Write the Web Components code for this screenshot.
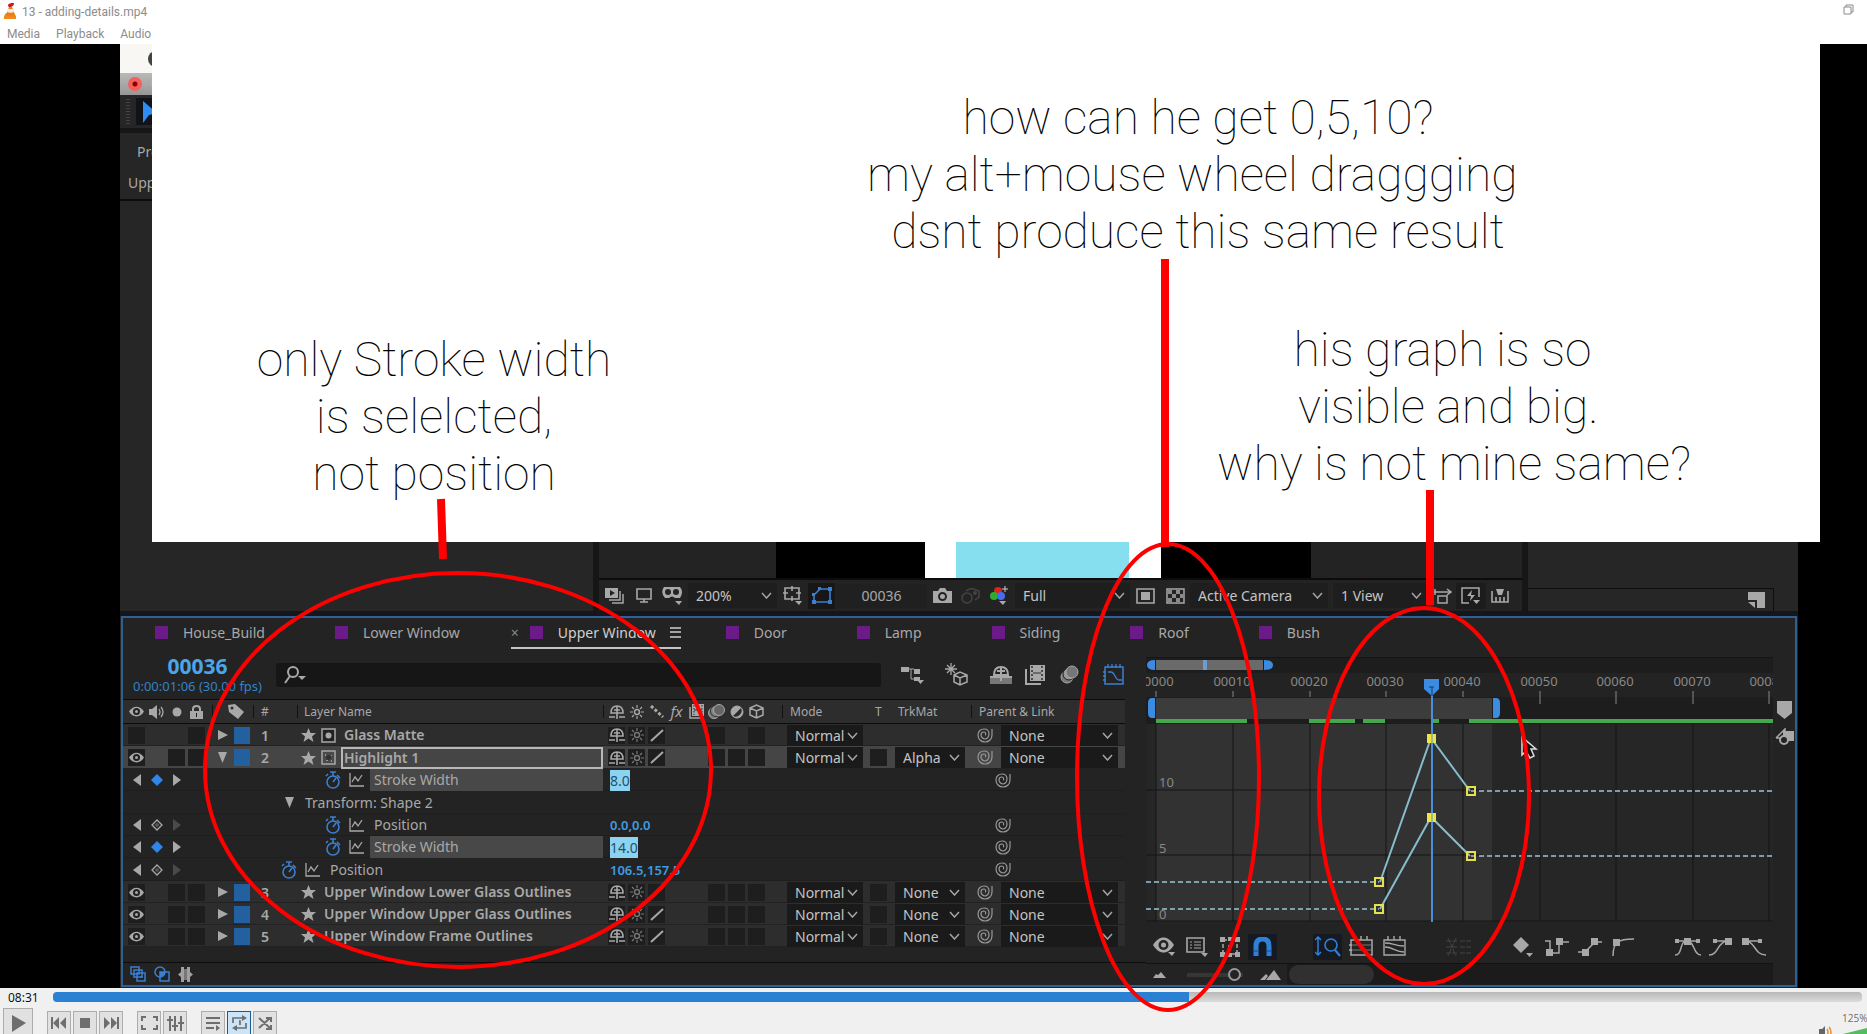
<!DOCTYPE html>
<html lang="en">
<head>
<meta charset="utf-8">
<title>13 - adding-details.mp4</title>
<style>
  body {
    margin: 0;
    background: #fff;
    font-family: "Noto Sans", "Open Sans", sans-serif;
    font-size: 14px;
  }
</style>
</head>
<body>
<video-player>
  <player-titlebar slot="title"></player-titlebar>
  <ae-window slot="video"></ae-window>
  <note-sheet slot="overlay"></note-sheet>
  <player-controls slot="controls"></player-controls>
</video-player>

<script>
// name: [width, height, svg content]
const ICONS = {
  cone: [14, 17, '<path d="M1 13l2-3h8l2 3v3H1z" fill="#f08a1c"/><path d="M3 12l3-8h3l3 8c-2 2-7 2-9 0z" fill="#ef7d12"/><path d="M4 9l1-3h5l1 3c-2 1-5 1-7 0z" fill="#eee"/><path d="M5 3c0-3 3-3 6-3 0 2-1 4-5 4z" fill="#d01818"/>'],
  restore: [11, 11, '<path d="M1 3h7v7H1zM3 3V1h7v7H8" fill="none" stroke="#8a8a8a"/>'],
  eye: [15, 11, '<path d="M0 5.5C4-1 11-1 15 5.5 11 12 4 12 0 5.5z" fill="currentColor"/><circle cx="7.500" cy="5.500" r="3.500" fill="#222"/><circle cx="7.500" cy="5.500" r="1.500" fill="currentColor"/>'],
  speaker: [15, 14, '<path d="M0 4h3l5-4v14L3 10H0z" fill="currentColor"/><path d="M10 4q2 3 0 6M12 2q4 5 0 10" fill="none" stroke="currentColor" stroke-width="1.300"/>'],
  dot: [10, 10, '<circle cx="5" cy="5" r="4.500" fill="currentColor"/>'],
  lock: [13, 14, '<path d="M0 6h13v8H0z" fill="currentColor"/><path d="M3 7V4q0-3 3.500-3T10 4v3" fill="none" stroke="currentColor" stroke-width="2"/><path d="M6 8h1v4H6z" fill="#222"/>'],
  tag: [16, 15, '<path d="M0 1l7-1 9 8-6 7L1 8z" fill="currentColor"/><circle cx="4" cy="4" r="1.500" fill="#2c2c2c"/>'],
  shy: [16, 14, '<path d="M2 8q0-7 6-7t6 7zM8 1v13M5 5h6M0 12h6M10 12h6" fill="none" stroke="currentColor" stroke-width="1.600"/>'],
  sun: [14, 14, '<circle cx="7" cy="7" r="2.500" fill="none" stroke="currentColor" stroke-width="1.400"/><path d="M7 0v3M7 11v3M0 7h3M11 7h3M2 2l2 2M10 10l2 2M12 2l-2 2M4 10l-2 2" stroke="currentColor" stroke-width="1.200"/>'],
  dashes: [14, 13, '<path d="M1 1l12 11" stroke="currentColor" stroke-width="3" stroke-dasharray="3 2"/>'],
  slash: [14, 13, '<path d="M1 12L13 1" stroke="currentColor" stroke-width="2"/>'],
  film: [15, 15, '<path d="M3 0h12v12H3z" fill="currentColor"/><path d="M1 3v11h11" fill="none" stroke="currentColor" stroke-width="1.500"/><path d="M5 1v10M13 1v10" stroke="#2c2c2c" stroke-dasharray="1.500"/><path d="M5 6h8" stroke="#2c2c2c"/>'],
  filmbig: [20, 20, '<path d="M5 0h15v16H5z" fill="currentColor"/><path d="M1 4v15h15" fill="none" stroke="currentColor" stroke-width="2"/><path d="M7 1v15M17 1v15" stroke="#2c2c2c" stroke-width="1.500" stroke-dasharray="2"/><path d="M8 8h8" stroke="#2c2c2c"/>'],
  blur: [17, 15, '<circle cx="6" cy="9" r="5.500" fill="#777" stroke="currentColor"/><circle cx="8" cy="7" r="5.500" fill="#888" stroke="#333"/><circle cx="11" cy="6" r="5.500" fill="#666" stroke="currentColor"/>'],
  blurbig: [19, 19, '<circle cx="7" cy="12" r="6" fill="#777" stroke="currentColor"/><circle cx="9" cy="9" r="6" fill="#999" stroke="#222"/><circle cx="12" cy="7" r="6" fill="#777" stroke="currentColor"/>'],
  half: [14, 14, '<circle cx="7" cy="7" r="6" fill="currentColor"/><path d="M11 3A6 6 0 0 1 3 11z" fill="#2c2c2c"/><circle cx="7" cy="7" r="6" fill="none" stroke="currentColor"/>'],
  cube: [15, 15, '<path d="M1 4l6.500-3L14 4v7l-6.500 3L1 11zM1 4l6.500 3L14 4M7.500 7v7" fill="none" stroke="currentColor" stroke-width="1.500"/>'],
  right: [10, 10, '<path d="M0 0l10 5-10 5z" fill="currentColor"/>'],
  down: [10, 11, '<path d="M0 0h9L4.500 11z" fill="currentColor"/>'],
  prev: [8, 12, '<path d="M8 0v12L0 6z" fill="currentColor"/>'],
  next: [8, 12, '<path d="M0 0v12l8-6z" fill="currentColor"/>'],
  key: [12, 12, '<path d="M6 1l5 5-5 5-5-5z" fill="none" stroke="currentColor" stroke-width="1.300"/><path d="M6 3.500L8.500 6 6 8.500 3.500 6z" fill="#555"/>'],
  keyon: [12, 12, '<path d="M6 0l6 6-6 6-6-6z" fill="currentColor"/>'],
  star: [15, 14, '<path d="M7.500 0l2 5H15l-4 3.500L12.500 14l-5-3.500-5 3.500L4 8.500 0 5h5.500z" fill="currentColor"/>'],
  matte: [15, 15, '<path d="M1 1h13v13H1z" fill="#222" stroke="currentColor" stroke-width="1.500"/><circle cx="7.500" cy="7.500" r="3" fill="currentColor"/>'],
  mattein: [15, 15, '<path d="M1 1h13v13H1z" fill="#4a4a4a" stroke="currentColor" stroke-width="1.500"/><path d="M4 4h1v2H4zM10 5h1v1h-1zM5 10h2v1H5zM10 10h1v2h-1z" fill="#999"/><circle cx="7.500" cy="7.500" r="2.500" fill="#333"/>'],
  watch: [16, 18, '<circle cx="8" cy="11" r="6" fill="none" stroke="currentColor" stroke-width="1.600"/><path d="M5 1h6M8 1v4M1 5l2-2M12 4l3 3M8 11l3-4" stroke="currentColor" stroke-width="1.600"/>'],
  curve: [15, 14, '<path d="M1 0v13h14M3 9l3-5 3 4 4-6" fill="none" stroke="currentColor" stroke-width="1.300"/>'],
  whip: [16, 15, '<path d="M15 1v6c0 4-3 7-7 7s-7-3-7-7 3-6 6-6 5 2 5 5-2 5-4 5-4-2-4-4 1-3 3-3 2 3 1 3" fill="none" stroke="currentColor" stroke-width="1.200"/>'],
  chevron: [11, 7, '<path d="M1 1l4.500 5L10 1" fill="none" stroke="currentColor" stroke-width="1.500"/>'],
  search: [22, 18, '<circle cx="9" cy="6" r="5" fill="none" stroke="currentColor" stroke-width="2"/><path d="M6 10l-5 7" stroke="currentColor" stroke-width="2"/><path d="M14 10h8l-4 4z" fill="currentColor"/>'],
  menu: [11, 11, '<path d="M0 1h11M0 5h11M0 10h11" stroke="currentColor" stroke-width="1.300"/>'],
  flow: [23, 18, '<path d="M0 1h8v5H0zM13 3h6v5h-6zM13 11h6v4h-6z" fill="currentColor"/><path d="M8 3h5M10 3v10h4" stroke="currentColor" fill="none"/><path d="M16 14h7l-3.500 4z" fill="currentColor"/>'],
  draft: [23, 23, '<path d="M6 0v12M0 6h12M2 2l8 8M10 2l-8 8" stroke="currentColor" stroke-width="1.300"/><path d="M9 12l6-3 7 3v7l-7 3-6-3zM9 12l6 3 7-3M15 15v7" fill="none" stroke="currentColor" stroke-width="1.500"/>'],
  shybig: [22, 18, '<path d="M0 11h22v7H0z" fill="#777"/><path d="M4 9q0-8 7-8t7 8zM11 1v14M7 5h8M0 11h22" fill="none" stroke="currentColor" stroke-width="2"/>'],
  grapheditor: [22, 22, '<path d="M2 3h18v17H2z" fill="none" stroke="currentColor" stroke-width="1.500"/><path d="M5 8h3c4 0 4 8 8 8h3M5 0v4M9 0v4M13 0v4M17 0v4M0 8h3M0 12h3M0 16h3" fill="none" stroke="currentColor" stroke-width="1.300"/>'],
  layersblue: [16, 16, '<path d="M1 1h8v7H1zM4 4h8v7H4zM7 7h8v8H7z" fill="#232323" stroke="currentColor" stroke-width="1.500"/><path d="M10 11h3" stroke="currentColor"/>'],
  modesblue: [16, 16, '<circle cx="6" cy="6" r="5" fill="none" stroke="currentColor" stroke-width="1.500"/><path d="M6 6h9v9H6z" fill="none" stroke="currentColor" stroke-width="1.500"/><path d="M6 6h5q0 4-5 5z" fill="currentColor"/>'],
  braces: [15, 15, '<path d="M3 0h3v15H3v-5L0 7.500 3 5zM12 0H9v15h3v-5l3-2.500L12 5z" fill="#a0a0a0"/><path d="M6 2h3v11H6z" fill="#777"/>'],
  preview: [19, 16, '<path d="M0 0h13v10H0z" fill="currentColor"/><path d="M5 2l5 3-5 3z" fill="#232323"/><path d="M4 12h11V3M7 15h11V6" fill="none" stroke="currentColor" stroke-width="1.500"/>'],
  monitor: [16, 15, '<path d="M1 1h14v10H1zM4 14h8M8 11v3" fill="none" stroke="currentColor" stroke-width="1.600"/>'],
  goggles: [22, 19, '<path d="M2 1h16q4 5 0 11h-5q-3-3-6 0H3Q-2 6 2 1z" fill="currentColor"/><circle cx="6" cy="6" r="3" fill="#232323"/><circle cx="14" cy="6" r="3" fill="#232323"/><path d="M13 15h7l-3 4z" fill="currentColor"/>'],
  gridbox: [19, 19, '<path d="M2 2h14v11H2zM9 0v5M9 10v5M0 7h5M13 7h5" fill="none" stroke="currentColor" stroke-width="1.600"/><path d="M12 15h7l-3 4z" fill="currentColor"/>'],
  mask: [20, 17, '<path d="M2 15V8l6-6h10v13z" fill="none" stroke="currentColor" stroke-width="1.600"/><path d="M0 13h4v4H0zM16 13h4v4h-4zM16 0h4v4h-4zM6 0h3v3H6zM0 6h3v3H0z" fill="currentColor"/>'],
  camera: [19, 15, '<path d="M0 3h5l2-3h5l2 3h5v12H0z" fill="currentColor"/><circle cx="9.500" cy="8.500" r="3.500" fill="none" stroke="#232323" stroke-width="2"/>'],
  snapshot: [19, 16, '<circle cx="6" cy="10" r="5" fill="none" stroke="currentColor" stroke-width="1.500"/><path d="M5 3q5-4 10-1l3 1v6l-4 3" fill="none" stroke="currentColor" stroke-width="1.500"/><circle cx="14" cy="5" r="2" fill="currentColor"/>'],
  rgb: [18, 19, '<circle cx="8" cy="5" r="4" fill="#d22"/><circle cx="4" cy="10" r="4" fill="#2cae2c"/><circle cx="11" cy="10" r="4" fill="#4a6af0"/><path d="M15 0v6M12 3h6" stroke="#ccc"/><path d="M9 15h7l-3 4z" fill="#aaa"/>'],
  region: [19, 16, '<path d="M1 1h17v14H1z" fill="none" stroke="currentColor" stroke-width="1.600"/><path d="M5 4h9v8H5z" fill="currentColor"/>'],
  checker: [19, 16, '<path d="M1 1h17v14H1z" fill="none" stroke="currentColor" stroke-width="1.500"/><path d="M2 2h4v4H2zM10 2h4v4h-4zM6 6h4v4H6zM14 6h4v4h-4zM2 10h4v4H2zM10 10h4v4h-4z" fill="#8a8a8a"/>'],
  aspect: [18, 16, '<path d="M0 4h17M13 1l4 3-4 3M4 8h9v7H4zM1 1v6" fill="none" stroke="currentColor" stroke-width="1.500"/>'],
  fast: [20, 17, '<path d="M8 16H1V1h17v9" fill="none" stroke="currentColor" stroke-width="1.500"/><path d="M11 3L6 9h4l-1 5 5-6h-4zM12 13h7l-3.500 4z" fill="currentColor"/>'],
  ruler: [18, 14, '<path d="M1 2v11h16V2M5 8v5M9 8v5M13 8v5" fill="none" stroke="currentColor" stroke-width="1.600"/><path d="M5 0h8l-2 6H7z" fill="currentColor"/>'],
  note: [17, 16, '<path d="M0 0h17v16H9V8H0z" fill="currentColor"/><path d="M0 10h7v6z" fill="currentColor"/>'],
  eyebig: [22, 19, '<path d="M0 8C6-2 15-2 21 8 15 18 6 18 0 8z" fill="currentColor"/><circle cx="10.500" cy="8" r="5" fill="#232323"/><circle cx="10.500" cy="8" r="2.500" fill="currentColor"/><path d="M15 15h7l-3 4z" fill="currentColor"/>'],
  list: [22, 20, '<path d="M1 1h17v14H1z" fill="none" stroke="currentColor" stroke-width="1.600"/><path d="M4 5h2M8 5h7M4 8h2M8 8h7M4 11h2M8 11h7" stroke="currentColor"/><path d="M15 16h7l-3 4z" fill="currentColor"/>'],
  transform: [20, 20, '<path d="M3 3h14v14H3z" fill="none" stroke="currentColor" stroke-width="1.500" stroke-dasharray="4 2"/><path d="M0 0h5v5H0zM8 0h4v4H8zM15 0h5v5h-5zM0 15h5v5H0zM15 15h5v5h-5zM8 16h4v4H8zM8 8h3v3H8z" fill="currentColor"/>'],
  magnet: [19, 19, '<path d="M3 19V9q0-7 6.500-7T16 9v10" fill="none" stroke="currentColor" stroke-width="5"/><path d="M0 14h6M13 14h6" stroke="#1b4a80"/>'],
  autozoom: [26, 21, '<path d="M3 1v18M0 4l3-3 3 3M0 16l3 3 3-3" fill="none" stroke="currentColor" stroke-width="1.500"/><circle cx="16" cy="9" r="6" fill="none" stroke="currentColor" stroke-width="1.600"/><path d="M20 14l5 6" stroke="currentColor" stroke-width="2"/>'],
  fitsel: [24, 21, '<path d="M2 4h21v15H2zM6 0v4M12 0v4M18 0v4M0 9h3M0 14h3" fill="none" stroke="currentColor" stroke-width="1.500"/><path d="M3 9h19M3 14h19" stroke="#777"/>'],
  fitall: [24, 21, '<path d="M2 4h21v15H2zM6 0v4M12 0v4M18 0v4M3 7c8 0 10 3 19 3M3 11c8 0 10 5 19 5" fill="none" stroke="currentColor" stroke-width="1.400"/>'],
  separate: [26, 18, '<path d="M0 3h12M0 9h12M0 15h12M14 3h12M14 9h12M14 15h12M2 0l8 18M10 0L2 18" stroke="#444" stroke-dasharray="5 1"/>'],
  keybig: [22, 20, '<path d="M8 0l8 8-8 8-8-8z" fill="currentColor"/><path d="M13 16h7l-3.500 4z" fill="currentColor"/>'],
  hold: [24, 18, '<path d="M0 3h5v12h9V4h10" fill="none" stroke="currentColor" stroke-width="1.500"/><path d="M11 0h7v7h-7zM1 11h7v7H1z" fill="currentColor"/>'],
  linear: [24, 18, '<path d="M0 14h7L17 4h7" fill="none" stroke="currentColor" stroke-width="1.500"/><path d="M13 0h7v7h-7zM4 11h7v7H4z" fill="currentColor"/>'],
  bezier: [22, 18, '<path d="M1 18C1 4 6 1 22 1" fill="none" stroke="currentColor" stroke-width="1.500"/><path d="M1 1h7v7H1z" fill="currentColor"/>'],
  ease: [26, 18, '<path d="M1 3h23M0 17c8 0 4-14 12-14s6 14 14 14" fill="none" stroke="currentColor" stroke-width="1.500"/><path d="M9 0h7v7H9zM0 1h4v4H0zM21 1h4v4h-4z" fill="currentColor"/>'],
  easein: [24, 18, '<path d="M4 3h17M0 17c10 0 8-13 18-14" fill="none" stroke="currentColor" stroke-width="1.500"/><path d="M16 0h7v7h-7zM4 1h4v4H4z" fill="currentColor"/>'],
  easeout: [24, 18, '<path d="M3 3h17M4 3c10 1 8 14 20 14" fill="none" stroke="currentColor" stroke-width="1.500"/><path d="M0 0h7v7H0zM16 1h4v4h-4z" fill="currentColor"/>'],
  hillsmall: [13, 6, '<path d="M0 6l3-4 2 1 3-3 5 6z" fill="currentColor"/>'],
  hillbig: [21, 10, '<path d="M0 10l6-6 2 2-3 4zM6 10l8-10 7 10z" fill="currentColor"/>'],
  marker: [15, 18, '<path d="M0 0h15v12l-7.500 6L0 12z" fill="currentColor"/>'],
  button: [19, 17, '<path d="M8 3h11v10H8z" fill="currentColor"/><path d="M1 10l9-9v8M1 10h6" fill="none" stroke="currentColor" stroke-width="1.500"/><circle cx="9" cy="12" r="4" fill="#232323" stroke="currentColor" stroke-width="2"/>'],
  play: [15, 17, '<path d="M1 0l14 8L1 17z" fill="currentColor"/>'],
  skipback: [16, 12, '<path d="M0 0h2v12H0zM8 0v12L2 6zM15 0v12L9 6z" fill="currentColor"/>'],
  stop: [10, 10, '<path d="M0 0h10v10H0z" fill="currentColor"/>'],
  skipfwd: [16, 12, '<path d="M14 0h2v12h-2zM1 0v12l6-6zM8 0v12l6-6z" fill="currentColor"/>'],
  full: [17, 14, '<path d="M1 5V1h4M12 1h4v4M16 9v4h-4M5 13H1V9" fill="none" stroke="currentColor" stroke-width="2"/>'],
  sliders: [17, 15, '<path d="M3 0v15M8 0v15M14 0v15M0 4h6M5 10h6M11 7h6" stroke="currentColor" stroke-width="2"/>'],
  playlist: [15, 15, '<path d="M0 2h14M0 7h14M0 12h8" stroke="currentColor" stroke-width="2"/><path d="M10 9l4 3-4 3z" fill="currentColor"/>'],
  loop: [15, 16, '<path d="M1 8V3h11M14 8v5H3M7 6h1v4" fill="none" stroke="currentColor" stroke-width="1.700"/><path d="M10 0l5 3-5 3zM5 10l-5 3 5 3z" fill="currentColor"/>'],
  shuffle: [14, 14, '<path d="M1 2l11 10M1 12L12 2M8 2h5v4M13 9v4H8" fill="none" stroke="currentColor" stroke-width="2"/>'],
  sound: [14, 14, '<path d="M0 4h3l3-3v13l-3-3H0z" fill="#666"/><path d="M8 4q2 3 0 7M10 2q4 5 0 11" fill="none" stroke="#e8902a" stroke-width="1.500"/>']
};

class UiIcon extends HTMLElement {
  connectedCallback() {
    const [w, h, shape] = ICONS[this.getAttribute('name')];
    this.attachShadow({ mode: 'open' }).innerHTML = `
      <style>
        :host { display: inline-flex; flex: none; align-items: center; justify-content: center; }
        svg { display: block; flex: none; }
      </style>
      <svg width="${w}" height="${h}" viewBox="0 0 ${w} ${h}" aria-hidden="true">${shape}</svg>
    `;
  }
}
customElements.define('ui-icon', UiIcon);

class AeSelect extends HTMLElement {
  connectedCallback() {
    const value = this.getAttribute('value');
    this.attachShadow({ mode: 'open' }).innerHTML = `
      <style>
        :host { display: grid; align-items: stretch; background: #1a1a1a; color: #c4c4c4; }
        select, ui-icon { grid-area: 1 / 1; }
        select {
          appearance: none; width: 100%; min-width: 0; border: 0; border-radius: 0; margin: 0;
          padding: 0 0 0 8px; background: transparent; color: inherit;
          font: inherit;
        }
        ui-icon { justify-self: end; margin-right: 5px; pointer-events: none; color: #a5a5a5; }
      </style>
      <select aria-label="${this.getAttribute('label')}"><option>${value}</option></select>
      <ui-icon name="chevron"></ui-icon>
    `;
  }
}
customElements.define('ae-select', AeSelect);

class VideoPlayer extends HTMLElement {
  connectedCallback() {
    this.attachShadow({ mode: 'open' }).innerHTML = `
      <style>
        :host { display: flex; flex-direction: column; position: relative; height: 100vh; overflow: hidden; }
        .stage { flex: 1; min-height: 0; display: flex; background: #000; padding: 0 69px 0 120px; }
        ::slotted([slot="video"]) { flex: 1; min-width: 0; }
      </style>
      <slot name="title"></slot>
      <div class="stage"><slot name="video"></slot></div>
      <slot name="controls"></slot>
      <slot name="overlay"></slot>
    `;
  }
}
customElements.define('video-player', VideoPlayer);

class PlayerTitlebar extends HTMLElement {
  connectedCallback() {
    this.attachShadow({ mode: 'open' }).innerHTML = `
      <style>
        :host { display: block; height: 44px; background: #fff; color: #8c8c8c; font: 12px/22px Roboto, sans-serif; }
        .title { display: flex; align-items: center; gap: 5px; height: 23px; padding: 0 0 0 3px; white-space: nowrap; }
        nav { display: flex; gap: 16px; height: 21px; padding-left: 7px; }
        a { color: inherit; text-decoration: none; }
      </style>
      <div class="title"><ui-icon name="cone"></ui-icon><span>13 - adding-details.mp4</span></div>
      <nav><a href="#">Media</a><a href="#">Playback</a><a href="#">Audio</a></nav>
    `;
  }
}
customElements.define('player-titlebar', PlayerTitlebar);

class AeWindow extends HTMLElement {
  connectedCallback() {
    this.attachShadow({ mode: 'open' }).innerHTML = `
      <style>
        :host { display: flex; flex-direction: column; background: #232323; color: #a8a8a8; overflow: hidden; }
        .mac { height: 29px; background: #f8f7f3; display: flex; padding-left: 28px; align-items: center; }
        .mac i { width: 16px; height: 16px; border-radius: 8px; background: #444; }
        .bar { height: 22px; background: linear-gradient(#b9b9b9, #979797); display: flex; align-items: center; gap: 9px; padding-left: 8px; }
        .bar i { width: 14px; height: 14px; border-radius: 7px; background: radial-gradient(circle, #800 0 2px, #f4605c 3px); }
        .bar i + i { background: #f0a840; }
        .tools { height: 33px; border-bottom: 5px solid #161616; display: flex; align-items: center; gap: 6px; padding-left: 6px; background: #262626; color: #2f8cf0; }
        .grip { width: 4px; height: 25px; background: repeating-linear-gradient(#444 0 1px, #262626 1px 3px); }
        .tool { background: #101418; width: 28px; height: 27px; display: flex; align-items: center; padding-left: 7px; }
        .tool svg { display: block; }
        .top { flex: 1; min-height: 0; display: flex; background: #161616; gap: 6px; border-bottom: 5px solid #15161c; }
        .project { width: 473px; background: #262626; }
        .project p { margin: 0; height: 32px; line-height: 32px; padding-left: 8px; }
        .project p:first-child { padding: 3px 0 0 17px; height: 31px; }
        .project p + p { border-bottom: 2px solid #0c0c0c; }
        ae-viewer { flex: 1; min-width: 0; }
        .side { width: 270px; background: #262626; display: flex; align-items: flex-end; }
        .side div { flex: 1; height: 22px; margin-right: 24px; border: 1px solid #0e0e0e; border-width: 1px 1px 0 0; display: flex; justify-content: flex-end; align-items: center; padding-right: 8px; }
      </style>
      <div class="mac"><i></i></div>
      <div class="bar"><i></i><i></i></div>
      <div class="tools"><span class="grip"></span><span class="tool"><svg width="14" height="22" viewBox="0 0 14 22"><path d="M0 0l14 12-8 2-6 8z" fill="currentColor"/></svg></span></div>
      <div class="top">
        <section class="project"><p>Project</p><p>Upper Window</p></section>
        <ae-viewer></ae-viewer>
        <section class="side"><div><ui-icon name="note"></ui-icon></div></section>
      </div>
      <ae-timeline></ae-timeline>
    `;
  }
}

class AeViewer extends HTMLElement {
  connectedCallback() {
    this.attachShadow({ mode: 'open' }).innerHTML = `
      <style>
        :host { display: flex; flex-direction: column; background: #232323; overflow: hidden; }
        .canvas { flex: 1; min-height: 0; display: flex; justify-content: center; padding-right: 35px; border-bottom: 2px solid #0c0c0c; }
        .comp { width: 535px; background: #000; display: flex; justify-content: center; }
        .house { width: 236px; padding: 0 32px 0 31px; box-sizing: border-box; background: #fff; display: flex; }
        .pane { flex: 1; background: #85dfee; }
        .tools {
          display: grid; align-items: center; justify-items: center; height: 31px; white-space: nowrap;
          grid-template-columns: 31px 28px 30px 89px 30px 29px 91px 31px 25px 32px 115px 30px 30px 138px 5px 94px 31px 26px 32px 8px;
        }
        ae-select { width: 100%; height: 25px; background: #1e1e1e; }
        .on { background: #171717; width: 27px; height: 26px; color: #3c7fd0; }
        .dark { background: #1c1c1c; width: 30px; height: 26px; }
        .dim { color: #444; }
        button { font: inherit; color: inherit; border: 0; background: #202020; padding: 0; width: 100%; height: 24px; }
      </style>
      <div class="canvas"><div class="comp"><div class="house"><div class="pane"></div></div></div></div>
      <div class="tools">
        <ui-icon name="preview"></ui-icon><ui-icon name="monitor"></ui-icon><ui-icon name="goggles"></ui-icon>
        <ae-select label="Magnification" value="200%"></ae-select>
        <ui-icon name="gridbox"></ui-icon><ui-icon class="on" name="mask"></ui-icon>
        <button>00036</button>
        <ui-icon name="camera"></ui-icon><ui-icon class="dim" name="snapshot"></ui-icon><ui-icon name="rgb"></ui-icon>
        <ae-select label="Resolution" value="Full"></ae-select>
        <ui-icon name="region"></ui-icon><ui-icon name="checker"></ui-icon>
        <ae-select label="3D view" value="Active Camera"></ae-select><span></span>
        <ae-select label="View layout" value="1 View"></ae-select>
        <ui-icon name="aspect"></ui-icon><ui-icon class="dark" name="fast"></ui-icon><ui-icon name="ruler"></ui-icon>
      </div>
    `;
  }
}

const TABS = ['House_Build', 'Lower Window', 'Upper Window', 'Door', 'Lamp', 'Siding', 'Roof', 'Bush'];

class AeTimeline extends HTMLElement {
  connectedCallback() {
    this.attachShadow({ mode: 'open' }).innerHTML = `
      <style>
        :host { display: block; border: 2px solid #2f6095; margin: 0 1px 1px; background: #232323; }
        .tabs { display: flex; gap: 26px; height: 32px; padding-left: 13px; }
        .tab { display: flex; align-items: center; height: 31px; box-sizing: border-box; border: 0; border-bottom: 2px solid transparent; padding: 0; background: none; font: inherit; color: inherit; white-space: nowrap; }
        .tab.active { color: #d0d0d0; border-color: #c4c4c4; }
        .tab span { width: 19px; text-align: left; font-size: 14px; color: #888; }
        .tab i { width: 13px; height: 13px; background: #6a1b87; margin-right: 15px; }
        .tab ui-icon { width: 25px; justify-content: flex-end; }
        .tab:not(.active) span, .tab:not(.active) ui-icon { visibility: hidden; }
        .body { display: flex; }
        .left { width: 1023px; flex: none; display: flex; flex-direction: column; }
        .head { display: flex; align-items: center; height: 49px; }
        .time { width: 153px; box-sizing: border-box; padding-right: 4px; display: flex; flex-direction: column; align-items: center; color: #3682c4; line-height: 18px; white-space: nowrap; font-size: 13px; }
        .time button { border: 0; padding: 0; background: none; font: bold 21px/22px "Open Sans", sans-serif; color: #4ba5e8; }
        .search { width: 605px; box-sizing: border-box; height: 24px; background: #161616; border-radius: 3px; display: flex; align-items: center; padding-left: 8px; gap: 6px; }
        .search input { flex: 1; border: 0; background: none; color: inherit; font: inherit; outline: 0; }
        .head > ui-icon { width: 34px; }
        .head .flow { width: 62px; }
        .head .draft { width: 26px; margin-right: 15px; }
        .head .ge { color: #3c7fd0; width: 22px; margin-left: 17px; }
        footer { margin-top: auto; height: 22px; border-top: 1px solid #0c0c0c; display: flex; align-items: center; gap: 8px; padding-left: 7px; color: #3c7fd0; }
      </style>
      <div class="tabs">${TABS.map(name => `
        <button class="tab ${name === 'Upper Window' ? 'active' : ''}"><span aria-hidden="true">×</span><i></i>${name}<ui-icon name="menu"></ui-icon></button>`).join('')}
      </div>
      <div class="body">
        <div class="left">
          <div class="head">
            <div class="time"><button>00036</button>0:00:01:06 (30.00 fps)</div>
            <label class="search"><ui-icon name="search"></ui-icon><input type="text" aria-label="Search layers"></label>
            <ui-icon class="flow" name="flow"></ui-icon><ui-icon class="draft" name="draft"></ui-icon>
            <ui-icon name="shybig"></ui-icon><ui-icon name="filmbig"></ui-icon>
            <ui-icon name="blurbig"></ui-icon><ui-icon class="ge" name="grapheditor"></ui-icon>
          </div>
          <layer-table></layer-table>
          <footer><ui-icon name="layersblue"></ui-icon><ui-icon name="modesblue"></ui-icon><ui-icon name="braces"></ui-icon></footer>
        </div>
        <graph-editor></graph-editor>
      </div>
    `;
  }
}

const ROWS = [
  { num: 1, name: 'Glass Matte', icon: 'matte', boxes: [0, 2], cells: [0, 3] },
  { num: 2, name: 'Highlight 1', icon: 'mattein', open: true, eye: true, track: 'Alpha', boxes: [0, 1, 2], cells: [0, 2, 3] },
  { prop: 'Stroke Width', value: '8.0', key: true, selected: true },
  { group: 'Transform: Shape 2' },
  { prop: 'Position', value: '0.0,0.0' },
  { prop: 'Stroke Width', value: '14.0', key: true, selected: true },
  { prop: 'Position', value: '106.5,157.5', outer: true },
  { num: 3, name: 'Upper Window Lower Glass Outlines', eye: true, track: 'None', boxes: [0, 1, 2], cells: [0, 2, 3] },
  { num: 4, name: 'Upper Window Upper Glass Outlines', eye: true, track: 'None', boxes: [0, 1, 2], cells: [0, 2, 3] },
  { num: 5, name: 'Upper Window Frame Outlines', eye: true, track: 'None', boxes: [0, 1, 2], cells: [0, 2, 3] }
];

class LayerTable extends HTMLElement {
  connectedCallback() {
    this.attachShadow({ mode: 'open' }).innerHTML = `
      <style>
        :host { display: block; }
        table { width: 1023px; table-layout: fixed; border-collapse: collapse; }
        th, td { padding: 0; text-align: left; height: 22px; white-space: nowrap; overflow: hidden; }
        th { height: 25px; font-weight: normal; font-size: 12px; background: #2d2d2d; box-shadow: inset 0 1px #0c0c0c, inset 0 -1px #0c0c0c; }
        th + th:not(.plain) { background: linear-gradient(#111, #111) 0 6px / 1px 13px no-repeat #2d2d2d; }
        div { display: flex; align-items: center; height: 22px; box-sizing: border-box; }
        .av, .sw { gap: 3px; padding-left: 5px; }
        .av > *, .sw > * { width: 17px; height: 17px; flex: none; }
        .box { background: #1e1e1e; }
        .lab { gap: 6px; padding-left: 5px; }
        .lab ui-icon { width: 11px; }
        .lab i { width: 16px; height: 17px; background: #2360a0; }
        .num { padding-left: 8px; font-weight: 600; }
        .name { gap: 5px; padding-left: 4px; font-weight: 600; font-size: 14px; }
        .label { flex: 1; padding-left: 3px; line-height: 22px; }
        tr.layer td { background: #2d2d2d; box-shadow: inset 0 -1px #222; }
        tr.open td { background: #454545; }
        tr.open td, tr.outer td, tr.group td { height: 23px; }
        tr.open .label { border: 2px solid #b8b8b8; padding-left: 1px; line-height: 18px; }
        tr td.rest, th.rest { background: #232323 !important; box-shadow: none !important; }
        tr.prop td { box-shadow: inset 0 -1px #1e1e1e; }
        .pname { padding-left: 113px; }
        .pname .label { padding-left: 4px; }
        .outer .pname { padding-left: 69px; }
        .group .pname { padding-left: 73px; gap: 6px; }
        .pname .watch { color: #3c7fd0; margin-right: 8px; }
        .pname .curve { margin-right: 6px; }
        .picked .label { background: #484848; }
        .value { padding-left: 7px; color: #3f9be0; font-weight: 600; font-size: 13px; }
        .picked .value { font-weight: 400; font-size: 14px; }
        .picked .value span { background: #8bd3f0; color: #24506c; line-height: 21px; }
        .key { color: #2f86e8; } .off { color: #4a4a4a; }
        .mode { padding-left: 5px; } .mode ae-select { width: 76px; }
        .track { padding-left: 2px; } .track ae-select { width: 70px; }
        ae-select { height: 21px; }
        .parent { padding-left: 6px; gap: 8px; } .parent ae-select { width: 117px; }
        .whip { padding-left: 24px; }
        .parent ui-icon, .whip ui-icon { color: #999; }
        .t span { width: 17px; height: 17px; }
        .tpad { padding-left: 5px; }
      </style>
      <table>
        <colgroup>${[89, 41, 44, 306, 179, 88, 23, 78, 154, 21].map(w => `<col style="width:${w}px">`).join('')}</colgroup>
        <thead><tr>
          <th><div class="av"><ui-icon name="eye"></ui-icon><ui-icon name="speaker"></ui-icon><ui-icon name="dot"></ui-icon><ui-icon name="lock"></ui-icon></div></th>
          <th><div style="padding-left:16px"><ui-icon name="tag"></ui-icon></div></th>
          <th><div style="padding-left:8px">#</div></th>
          <th><div style="padding-left:7px">Layer Name</div></th>
          <th><div class="sw">${['shy', 'sun', 'dashes'].map(n => `<ui-icon name="${n}"></ui-icon>`).join('')}<i style="text-align:center;font-size:15px;line-height:17px">fx</i>${['film', 'blur', 'half', 'cube'].map(n => `<ui-icon name="${n}"></ui-icon>`).join('')}</div></th>
          <th><div style="padding-left:8px">Mode</div></th>
          <th class="plain"><div class="tpad">T</div></th>
          <th class="plain"><div class="tpad">TrkMat</div></th>
          <th><div style="padding-left:8px">Parent &amp; Link</div></th>
          <th class="rest"></th>
        </tr></thead>
        <tbody>${ROWS.map(row => row.num ? this.layerRow(row) : this.propRow(row)).join('')}</tbody>
      </table>
    `;
  }

  layerRow(row) {
    const av = [0, 1, 2, 3].map(i => i === 0 && row.eye
      ? '<ui-icon class="box" name="eye"></ui-icon>'
      : `<span class="${row.cells.includes(i) ? 'box' : ''}"></span>`).join('');
    const boxes = [0, 1, 2].map(i => `<span class="${row.boxes.includes(i) ? 'box' : ''}"></span>`).join('');
    return `
      <tr class="layer ${row.open ? 'open' : ''}">
        <td><div class="av">${av}</div></td>
        <td><div class="lab"><ui-icon name="${row.open ? 'down' : 'right'}"></ui-icon><i></i></div></td>
        <td><div class="num">${row.num}</div></td>
        <td><div class="name"><ui-icon name="star"></ui-icon>${row.icon ? `<ui-icon name="${row.icon}"></ui-icon>` : ''}<span class="label">${row.name}</span></div></td>
        <td><div class="sw"><ui-icon class="box" name="shy"></ui-icon><ui-icon class="box" style="color:#777" name="sun"></ui-icon><ui-icon class="box" name="slash"></ui-icon><span></span><span></span>${boxes}</div></td>
        <td><div class="mode"><ae-select label="Mode ${row.num}" value="Normal"></ae-select></div></td>
        <td><div class="t">${row.track ? '<span class="box"></span>' : ''}</div></td>
        <td><div class="track">${row.track ? `<ae-select label="Track matte ${row.num}" value="${row.track}"></ae-select>` : ''}</div></td>
        <td><div class="parent"><ui-icon name="whip"></ui-icon><ae-select label="Parent ${row.num}" value="None"></ae-select></div></td>
        <td class="rest"></td>
      </tr>`;
  }

  propRow(row) {
    if (row.group) {
      return `<tr class="prop group"><td></td><td colspan="3"><div class="pname"><ui-icon name="down"></ui-icon><span class="label">${row.group}</span></div></td><td colspan="5"></td><td class="rest"></td></tr>`;
    }
    return `
      <tr class="prop ${row.outer ? 'outer' : ''} ${row.selected ? 'picked' : ''}">
        <td><div class="av"><ui-icon name="prev"></ui-icon><ui-icon class="${row.key ? 'key' : ''}" name="${row.key ? 'keyon' : 'key'}"></ui-icon><ui-icon class="${row.key ? '' : 'off'}" name="next"></ui-icon></div></td>
        <td colspan="3"><div class="pname"><ui-icon class="watch" name="watch"></ui-icon><ui-icon class="curve" name="curve"></ui-icon><span class="label">${row.prop}</span></div></td>
        <td><div class="value"><span>${row.value}</span></div></td>
        <td colspan="3"></td>
        <td><div class="whip"><ui-icon name="whip"></ui-icon></div></td>
        <td class="rest"></td>
      </tr>`;
  }
}

class GraphEditor extends HTMLElement {
  connectedCallback() {
    // one label every ten frames
    const ticks = [9, 86, 163, 239, 316, 393, 469, 546, 622];
    const rulerTicks = ticks.map((x, i) => `
      <path d="M${x + 1} 34v${i > 4 ? 13 : 6}" stroke="#888"/>
      <text x="${x}" y="29" text-anchor="middle">000${i ? i + '0' : '00'}</text>`).join('');
    const cols = ticks.map(x => `<path d="M${x + 1} 67v197" stroke="#151515"/>`).join('');
    const levels = [133, 198, 264].map(y => `<path d="M0 ${y}h337" stroke="#151515"/>`).join('');
    this.attachShadow({ mode: 'open' }).innerHTML = `
      <style>
        :host { display: flex; flex: 1; min-width: 0; padding-top: 7px; }
        .main { flex: 1; min-width: 0; overflow: hidden; background: #232323; }
        .plot { display: block; width: 100%; height: 265px; background: #1d1d1d; overflow: hidden; }
        text { font: 13px "Noto Sans", sans-serif; fill: #888; }
        .tools { display: flex; gap: 32px; height: 41px; align-items: center; padding: 8px 0 0 1px; box-sizing: border-box; }
        .tools div { display: flex; }
        .tools ui-icon { width: 33px; height: 26px; }
        .on { color: #2f80d8; background: linear-gradient(#151a22, #151a22) center / 29px 100% no-repeat; }
        .zoom { display: flex; align-items: center; height: 22px; border-top: 1px solid #111; box-sizing: border-box; background: #1b1b1b; }
        .zoom label { display: flex; align-items: center; height: 21px; width: 141px; box-sizing: border-box; padding-left: 7px; background: #232323; }
        input { appearance: none; width: 56px; height: 4px; margin: 0 17px 0 21px; background: #363636; }
        input::-webkit-slider-thumb { appearance: none; width: 13px; height: 13px; box-sizing: border-box; border: 2px solid #999; border-radius: 7px; background: #232323; }
        .thumb { width: 85px; height: 19px; margin-left: 2px; border-radius: 10px; background: #303030; }
        .gutter { width: 22px; display: flex; flex-direction: column; align-items: center; gap: 9px; padding-top: 44px; box-sizing: border-box; }
      </style>
      <div class="main">
        <svg class="plot">
          <path d="M0 0h700v1H0z" fill="#151515"/>
          <path d="M10 3h107v10H10z" fill="#6a6a6a"/><path d="M57 3h4v10h-4z" fill="#6f9ccf"/>
          <path d="M9 3v10Q1 13 1 8t8-5zM118 3v10q9 0 9-5t-9-5z" fill="#3b8be0"/>
          <path d="M0 16h700v24H0z" fill="#232323"/>
          ${rulerTicks}
          <path d="M10 41h336v21H10z" fill="#3c3c3c"/>
          <path d="M9 41v20H6q-4 0-4-5V46q0-5 4-5zM347 41v20h3q4 0 4-5V46q0-5-4-5z" fill="#3b8be0"/>
          <path d="M10 62h91v4H10zM163 62h46v4h-46zM217 62h22v4h-22zM286 62h7v4h-7zM323 62h400v4H323z" fill="#45a84c"/>
          <path d="M0 67h700v198H0z" fill="#262626"/><path d="M10 67h336v197H10z" fill="#323232"/>
          ${cols}${levels}<path d="M337 264h400" stroke="#151515"/>
          <text x="13" y="130">10</text><text x="13" y="196">5</text><text x="13" y="262">0</text>
          <path d="M0 225h233M0 252h233M325 134h302M325 199h302" stroke="#93c9d4" stroke-width="1.500" stroke-dasharray="5 3"/>
          <path d="M234 225L285 81l39 53M234 252l51-92 39 39" fill="none" stroke="#86bccb" stroke-width="2"/>
          <path d="M286 22v243" stroke="#4a8fdc" stroke-width="2"/>
          <path d="M229 221h8v8h-8zM229 248h8v8h-8zM321 130h8v8h-8zM321 195h8v8h-8z" fill="none" stroke="#e8e04a" stroke-width="2"/>
          <path d="M281 77h9v9h-9zM281 156h9v9h-9z" fill="#f0e440"/><path d="M286 76v90" stroke="#4a8fdc" stroke-width="1"/>
          <path d="M278 22h15v10l-7 7-8-7z" fill="#3b8be0"/><path d="M283 30h5M286 30v9" stroke="#123a66"/>
          <path d="M376 80v18l4-4 4 7 4-2-3-7h5z" fill="#111" stroke="#ddd" stroke-width="1.500"/>
        </svg>
        <div class="tools">
          <div><ui-icon name="eyebig"></ui-icon><ui-icon name="list"></ui-icon><ui-icon name="transform"></ui-icon><ui-icon class="on" name="magnet"></ui-icon></div>
          <div><ui-icon class="on" name="autozoom"></ui-icon><ui-icon name="fitsel"></ui-icon><ui-icon name="fitall"></ui-icon></div>
          <div><ui-icon name="separate"></ui-icon></div>
          <div><ui-icon name="keybig"></ui-icon><ui-icon name="hold"></ui-icon><ui-icon name="linear"></ui-icon><ui-icon name="bezier"></ui-icon></div>
          <div><ui-icon name="ease"></ui-icon><ui-icon name="easein"></ui-icon><ui-icon name="easeout"></ui-icon></div>
        </div>
        <div class="zoom"><label><ui-icon name="hillsmall"></ui-icon><input type="range" aria-label="Time zoom" value="96"><ui-icon name="hillbig"></ui-icon></label><span class="thumb"></span></div>
      </div>
      <div class="gutter"><ui-icon name="marker"></ui-icon><ui-icon name="button"></ui-icon></div>
    `;
  }
}

class PlayerControls extends HTMLElement {
  connectedCallback() {
    this.attachShadow({ mode: 'open' }).innerHTML = `
      <style>
        :host { display: block; height: 46px; overflow: hidden; background: #f0f0f0; color: #6e6e6e; }
        .seek { display: flex; align-items: center; gap: 17px; height: 20px; padding: 0 5px 0 8px; color: #111; }
        .seek span { width: 28px; white-space: nowrap; font: 12px/20px "Noto Sans", sans-serif; }
        .seek input { appearance: none; flex: 1; margin: 0 0 2px; height: 10px; border-radius: 4px; background: linear-gradient(90deg, #2a80d2 0 62.8%, transparent 62.8%), linear-gradient(#b8b8b8, #dcdcdc); }
        .seek input::-webkit-slider-thumb { appearance: none; width: 0; }
        .row { display: flex; align-items: flex-start; padding-left: 3px; }
        button { width: 24px; height: 24px; margin: 3px 2px 0 0; padding: 0; border: 1px solid #adadad; background: #e1e1e1; color: inherit; box-sizing: border-box; display: flex; align-items: center; justify-content: center; }
        button.play { width: 30px; height: 30px; margin: 0 14px 0 0; }
        button.last { margin-right: 14px; }
        button.active { background: #cce4f7; border-color: #1a5a90; }
        .sound { margin: 17px 0 0 auto; }
        .volume { display: grid; margin: 2px 0 0 6px; width: 28px; font: 10px/16px "Open Sans", sans-serif; }
        .volume svg { display: block; margin-top: 2px; }
        .volume span { padding-left: 3px; }
      </style>
      <div class="seek"><span>08:31</span><input type="range" aria-label="Position" value="63"></div>
      <div class="row">
        <button class="play" aria-label="Play"><ui-icon name="play"></ui-icon></button>
        <button aria-label="Previous"><ui-icon name="skipback"></ui-icon></button>
        <button aria-label="Stop"><ui-icon name="stop"></ui-icon></button>
        <button class="last" aria-label="Next"><ui-icon name="skipfwd"></ui-icon></button>
        <button aria-label="Fullscreen"><ui-icon name="full"></ui-icon></button>
        <button class="last" aria-label="Extended settings"><ui-icon name="sliders"></ui-icon></button>
        <button aria-label="Playlist"><ui-icon name="playlist"></ui-icon></button>
        <button class="active" aria-label="Loop"><ui-icon name="loop"></ui-icon></button>
        <button aria-label="Random"><ui-icon name="shuffle"></ui-icon></button>
        <ui-icon class="sound" name="sound"></ui-icon>
        <div class="volume"><span>125%</span><svg width="28" height="14"><path d="M0 7L28 0v14H0z" fill="#52bd5a"/></svg></div>
      </div>
    `;
  }
}

// white sheet with the questions, and the red marks that point at the timeline
class NoteSheet extends HTMLElement {
  connectedCallback() {
    this.attachShadow({ mode: 'open' }).innerHTML = `
      <style>
        :host { position: absolute; inset: 0; pointer-events: none; }
        .sheet { position: absolute; left: 152px; right: 47px; top: 0; height: 542px; background: #fff; }
        .corner { position: absolute; right: 13px; top: 4px; }
        p { position: absolute; margin: 0; text-align: center; white-space: nowrap; color: #000; font: 100 48px/57px Roboto, sans-serif; transform: translateX(-50%); }
        .marks { position: absolute; left: 0; top: 0; width: 100%; height: 100%; }
      </style>
      <div class="sheet"></div>
      <ui-icon class="corner" name="restore"></ui-icon>
      <p style="left:434px;top:331px">only Stroke width<br>is selelcted,<br>not position</p>
      <p style="left:1198px;top:89px">how can he get 0,5,10?<br>my alt+mouse wheel draggging&nbsp;<br>dsnt produce this same result</p>
      <p style="left:1454px;top:321px">his graph is so&nbsp;&nbsp;<br>visible and big.&nbsp;<br>why is not mine same?</p>
      <svg class="marks" fill="none" stroke="#f00" stroke-width="4">
        <path d="M441 499l2 60M1165 259v288M1430 490v115" stroke-width="8"/>
        <ellipse cx="458" cy="770" rx="253" ry="197"/>
        <ellipse cx="1168" cy="777" rx="91" ry="233"/>
        <ellipse cx="1424" cy="796" rx="105" ry="188"/>
      </svg>
    `;
  }
}

customElements.define('ae-window', AeWindow);
customElements.define('ae-viewer', AeViewer);
customElements.define('ae-timeline', AeTimeline);
customElements.define('layer-table', LayerTable);
customElements.define('graph-editor', GraphEditor);
customElements.define('player-controls', PlayerControls);
customElements.define('note-sheet', NoteSheet);
</script>
</body>
</html>
